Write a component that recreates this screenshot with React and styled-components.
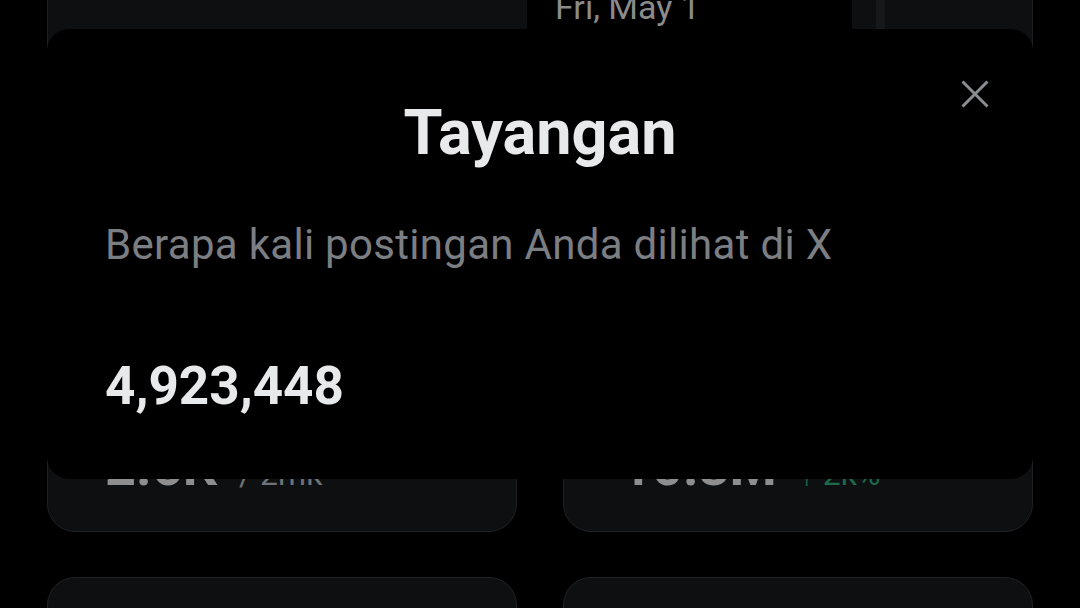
import React from 'react';
import styled, { createGlobalStyle } from 'styled-components';

const GlobalStyle = createGlobalStyle`
  html, body {
    margin: 0;
    padding: 0;
    background: #000;
    font-family: Roboto, "Noto Sans", "Liberation Sans", sans-serif;
    overflow: hidden;
  }
`;

const stats = [
  { label: 'Tayangan', value: '2.6K', extra: '/ 2mk', up: false },
  { label: 'Interaksi', value: '10.3M', extra: '↑ 2k%', up: true },
  { label: 'Keterlibatan', value: '0', extra: '', up: false },
  { label: 'Profil', value: '0', extra: '', up: false },
];

function App() {
  return (
    <>
      <GlobalStyle />
      <Screen>
        <Feed>
          <ChartCard>
            <Tooltip>Fri, May 1</Tooltip>
            <Cursor />
          </ChartCard>
          <StatGrid>
            {stats.map((s) => (
              <StatCard key={s.label}>
                <StatLabel>{s.label}</StatLabel>
                <StatRow>
                  <StatValue>{s.value}</StatValue>
                  <StatExtra up={s.up}>{s.extra}</StatExtra>
                </StatRow>
              </StatCard>
            ))}
          </StatGrid>
        </Feed>

        <Modal>
          <CloseButton aria-label="Tutup">
            <svg width="28" height="28" viewBox="0 0 28 28">
              <path d="M1.5 1.5 L26.5 26.5 M26.5 1.5 L1.5 26.5" stroke="#8a8d91" strokeWidth="3" fill="none" />
            </svg>
          </CloseButton>
          <Title>Tayangan</Title>
          <Subtitle>Berapa kali postingan Anda dilihat di X</Subtitle>
          <BigNumber>4,923,448</BigNumber>
        </Modal>
      </Screen>
    </>
  );
}

export default App;

const Screen = styled.div`
  position: relative;
  width: 1080px;
  height: 608px;
  overflow: hidden;
  background: #000;
`;

const Feed = styled.div`
  display: flex;
  flex-direction: column;
  gap: 45px;
  padding: 0 47px;
  margin-top: -140px;
`;

const ChartCard = styled.div`
  position: relative;
  height: 420px;
  background: #0e0f11;
  border: 1px solid #1d1f22;
  border-radius: 28px;
  box-sizing: border-box;
`;

const Tooltip = styled.div`
  position: absolute;
  left: 479px;
  top: 40px;
  width: 325px;
  height: 160px;
  background: #000;
  display: flex;
  align-items: flex-end;
  box-sizing: border-box;
  padding: 0 0 34px 28px;
  color: #8b8b8b;
  font-size: 34px;
  line-height: 40px;
`;

const Cursor = styled.div`
  position: absolute;
  left: 828px;
  top: 40px;
  bottom: 0;
  width: 9px;
  background: #17181a;
`;

const StatGrid = styled.div`
  display: grid;
  grid-template-columns: 1fr 1fr;
  column-gap: 46px;
  row-gap: 45px;
`;

const StatCard = styled.div`
  height: 207px;
  background: #0e0f11;
  border: 1px solid #1f2124;
  border-radius: 28px;
  box-sizing: border-box;
  padding: 40px 0 0 57px;
  display: flex;
  flex-direction: column;
  gap: 34px;
`;

const StatLabel = styled.div`
  color: #6f7276;
  font-size: 32px;
  line-height: 40px;
`;

const StatRow = styled.div`
  display: flex;
  align-items: baseline;
  gap: 22px;
`;

const StatValue = styled.div`
  color: #8e8e8e;
  font-size: 54px;
  font-weight: 700;
  line-height: 54px;
`;

const StatExtra = styled.div`
  color: ${(p) => (p.up ? '#1c6a4c' : '#6f7276')};
  font-size: 32px;
  line-height: 40px;
`;

const Modal = styled.div`
  position: absolute;
  left: 47px;
  top: 29px;
  width: 986px;
  height: 450px;
  background: #000;
  border-radius: 22px;
  box-sizing: border-box;
  padding: 68px 58px 0;
  display: flex;
  flex-direction: column;
`;

const CloseButton = styled.button`
  position: absolute;
  top: 51px;
  right: 44px;
  width: 28px;
  height: 28px;
  padding: 0;
  border: 0;
  background: none;
  display: flex;
`;

const Title = styled.h1`
  margin: 0;
  text-align: center;
  color: #e7e9ea;
  font-size: 63px;
  font-weight: 700;
  line-height: 72px;
  letter-spacing: 0px;
`;

const Subtitle = styled.p`
  margin: 51px 0 0;
  color: #7b7e82;
  font-size: 42px;
  line-height: 50px;
  letter-spacing: 0.3px;
`;

const BigNumber = styled.div`
  margin-top: 86px;
  color: #e7e9ea;
  font-size: 53px;
  font-weight: 700;
  line-height: 60px;
`;
